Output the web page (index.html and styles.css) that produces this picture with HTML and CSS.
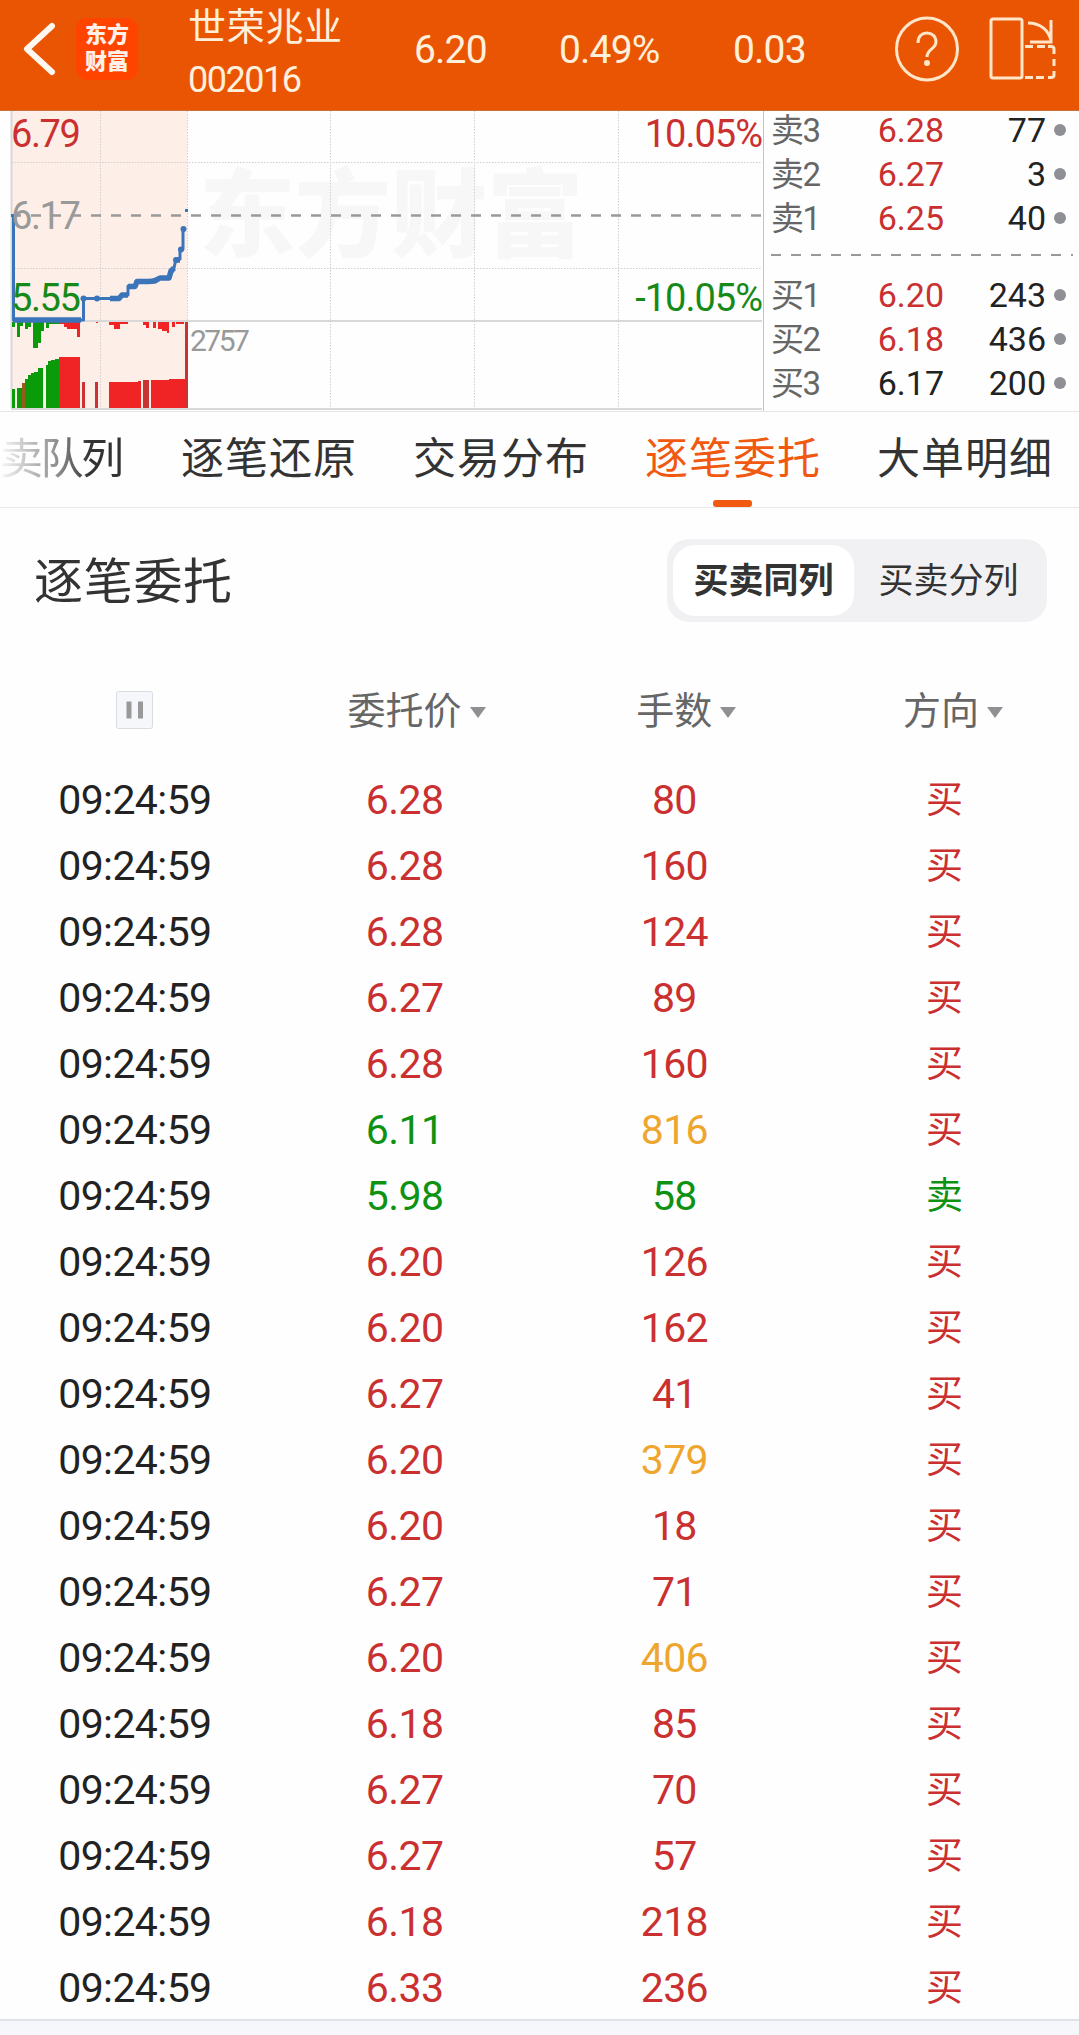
FILE: index.html
```html
<!DOCTYPE html>
<html lang="zh-CN">
<head>
    <meta charset="UTF-8">
    <meta name="viewport" content="width=device-width, initial-scale=1.0">
    <title>世荣兆业 002016</title>
    <link rel="stylesheet" href="styles.css">
</head>
<body>
    <header class="topbar">
        <svg class="back" viewBox="0 0 34 54"><path d="M30 4 L5 27 L30 50"/></svg>
        <div class="logo">东方<br>财富</div>
        <div class="stock">
            <div class="stock-name">世荣兆业</div>
            <div class="stock-code">002016</div>
        </div>
        <div class="quote">6.20</div>
        <div class="quote">0.49%</div>
        <div class="quote">0.03</div>
        <svg class="help" viewBox="0 0 64 66">
            <ellipse cx="32" cy="33" rx="30.5" ry="31"/>
            <path d="M23 27 C23 20 27 17 32 17 C37 17 41 20.500 41 26 C41 33 32 33 32 41"/>
            <circle class="fill" cx="32" cy="47" r="3"/>
        </svg>
        <svg class="rotate" viewBox="0 0 68 64">
            <rect x="2" y="2" width="31" height="59" rx="2"/>
            <path d="M39 6 C51 6 60 13 62 24 M62 3 V25 H41"/>
            <path d="M36 29.500 H44 M48 29.500 H56 M59 29.500 H62 Q65 29.500 65 32 V37 M65 42 V49 M65 54 V58 Q65 60.500 62 60.500 H59 M55 60.500 H47 M44 60.500 H36"/>
        </svg>
    </header>

    <section class="market">
        <svg class="chart" viewBox="0 0 764 300">
            <rect class="auction" x="12" y="0" width="175" height="297"/>
            <text class="watermark" x="199" y="138">东方财富</text>
            <path class="grid" d="M12 51.500 H762 M12 157.500 H762 M100.500 0 V297 M187.500 0 V297 M330.500 0 V297 M474.500 0 V297 M618.500 0 V297"/>
            <path class="axis" d="M11.500 0 V297 M11 210 H762 M11 298 H762"/>
            <path class="edge" d="M763.500 0 V300"/>
            <path class="close-line" d="M11 104.500 H762"/>
            <g id="bars"></g>
            <path class="price" d="M11 104.500 H13.500 V209 H83.500 V187.500 H119 L122 184 H128 V175 H136 V170 H151 L158 167 H169 L174 157 L176 148 H180 V138 H183 V118"/>
            <path class="price-thick" d="M13 209 H81 M110 187.500 H119 L122 184 H128 M128 175.500 H135 L137 170.500 H148 L155 170 L160 167 H169 L171 160 L174 157 M175 149 H180"/>
            <g class="dots">
                <circle cx="83.500" cy="187.500" r="3"/>
                <circle cx="97" cy="187.500" r="3"/>
                <circle cx="176" cy="149" r="3"/>
                <circle cx="181" cy="138.500" r="3"/>
                <circle cx="183.500" cy="118" r="3"/>
                <rect x="185" y="98" width="3" height="3"/>
            </g>
            <text class="label up" x="11" y="36">6.79</text>
            <text class="label mid" x="11" y="118">6.17</text>
            <text class="label down" x="11" y="200">5.55</text>
            <text class="label up end" x="762" y="36">10.05%</text>
            <text class="label down end" x="762" y="200">-10.05%</text>
            <text class="volume" x="190" y="240">2757</text>
        </svg>
        <div class="book">
            <div class="level"><span>卖3</span><b class="up">6.28</b><i>77</i></div>
            <div class="level"><span>卖2</span><b class="up">6.27</b><i>3</i></div>
            <div class="level"><span>卖1</span><b class="up">6.25</b><i>40</i></div>
            <svg class="split" viewBox="0 0 302 2"><path d="M0 1 H302"/></svg>
            <div class="level"><span>买1</span><b class="up">6.20</b><i>243</i></div>
            <div class="level"><span>买2</span><b class="up">6.18</b><i>436</i></div>
            <div class="level"><span>买3</span><b>6.17</b><i>200</i></div>
        </div>
    </section>

    <nav class="tabs">
        <a class="faded">卖队列</a>
        <a>逐笔还原</a>
        <a>交易分布</a>
        <a class="active">逐笔委托</a>
        <a>大单明细</a>
    </nav>

    <div class="title-row">
        <h1>逐笔委托</h1>
        <div class="switch">
            <button class="on">买卖同列</button>
            <button>买卖分列</button>
        </div>
    </div>

    <div class="row head">
        <div><svg class="pause" viewBox="0 0 37 38"><rect x=".5" y=".5" width="36" height="37" rx="2"/><path d="M13 10.500 V27.500 M24.500 10.500 V27.500"/></svg></div>
        <div><span class="sort">委托价</span></div>
        <div><span class="sort">手数</span></div>
        <div><span class="sort">方向</span></div>
    </div>
    <div id="orders" class="orders"></div>
    <footer class="bottom"></footer>

    <script src="script.js"></script>
</body>
</html>
```
FILE: styles.css
```css
* {
    box-sizing: border-box;
}
body {
    margin: 0;
    background: #fefefe;
    color: #222;
    font-family: Roboto, "Noto Sans CJK SC", sans-serif;
    height: 2035px;
    overflow: hidden;
}
svg {
    display: block;
    flex: none;
}
.topbar {
    display: flex;
    align-items: center;
    height: 111px;
    padding-bottom: 13px;
    background: #ea5504;
    border-bottom: 1px solid #c8703c;
    color: #fff0dc;
}
.topbar svg {
    fill: none;
    stroke: #ffe6c8;
    stroke-width: 3;
}
.topbar .back {
    width: 34px;
    height: 54px;
    margin-left: 22px;
    stroke: #fff8f0;
    stroke-width: 6;
    stroke-linecap: round;
    stroke-linejoin: round;
}
.logo {
    width: 62px;
    height: 62px;
    margin-left: 20px;
    padding-top: 3px;
    border-radius: 11px;
    background: #ff4400;
    color: #fff0e8;
    font-size: 22px;
    font-weight: 900;
    line-height: 27px;
    text-align: center;
}
.stock {
    width: 226px;
    margin-left: 50px;
    padding-top: 10px;
}
.stock-name {
    font-size: 38px;
    line-height: 52px;
    letter-spacing: 0.7px;
}
.stock-code {
    font-size: 36px;
    line-height: 54px;
    letter-spacing: -1.5px;
}
.quote {
    width: 145px;
    font-size: 39px;
    letter-spacing: -0.8px;
    padding-top: 2px;
}
.quote + .quote {
    width: 174px;
}
.quote + .quote + .quote {
    width: 162px;
}
.help {
    width: 64px;
    height: 66px;
}
.topbar .help .fill {
    fill: #ffe6c8;
    stroke: none;
}
.rotate {
    width: 68px;
    height: 64px;
    margin-left: 30px;
}

.market {
    display: flex;
    height: 301px;
    border-bottom: 1px solid #e6e6e6;
}
.chart {
    width: 764px;
    height: 300px;
}
.auction {
    fill: #fdeee7;
}
.watermark {
    font-size: 96px;
    font-weight: 900;
    fill: #f7f7f7;
}
.grid {
    fill: none;
    stroke: #cfcfcf;
    stroke-dasharray: 1.5 1.5;
}
.axis {
    fill: none;
    stroke: #d8d8d8;
    stroke-width: 2;
}
.edge {
    stroke: #c4c4c4;
}
.close-line {
    stroke: #999;
    stroke-width: 2.5;
    stroke-dasharray: 10 10;
}
.price, .price-thick {
    fill: none;
    stroke: #3b74b9;
    stroke-width: 3;
    stroke-linejoin: round;
}
.price-thick {
    stroke-width: 5.5;
}
.dots {
    fill: #3b74b9;
}
.label {
    font-size: 38px;
    letter-spacing: -1.4px;
}
.end {
    text-anchor: end;
    letter-spacing: -1px;
}
.up {
    color: #cb3030;
    fill: #cb3030;
}
.down {
    color: #0f9212;
    fill: #158a18;
}
.mid {
    fill: #999;
}
.volume {
    font-size: 30px;
    letter-spacing: -2.5px;
    fill: #999;
}

.book {
    flex: 1;
    padding: 0 12px 0 7px;
}
.level {
    display: flex;
    align-items: center;
    height: 44px;
    position: relative;
    top: -3px;
    padding-right: 7px;
    font-size: 34px;
}
.level span {
    width: 73px;
    margin-top: -5px;
    color: #666;
    font-size: 33px;
    letter-spacing: -1.5px;
}
.level b {
    width: 100px;
    font-weight: 400;
    text-align: right;
}
.level i {
    flex: 1;
    font-style: normal;
    text-align: right;
}
.level::after {
    content: "";
    width: 12px;
    height: 12px;
    margin-left: 8px;
    border-radius: 50%;
    background: #8f8f96;
}
.split {
    width: 302px;
    height: 2px;
    margin: 11px 0 20px;
}
.split path {
    stroke: #999;
    stroke-width: 2;
    stroke-dasharray: 10 10;
}

.tabs {
    display: flex;
    gap: 56px;
    height: 96px;
    overflow: hidden;
    border-bottom: 1px solid #e8e8e8;
    color: #333;
    font-size: 43px;
    line-height: 94px;
    letter-spacing: 1px;
    white-space: nowrap;
}
.tabs a {
    flex: none;
    position: relative;
}
.tabs .faded {
    width: 125px;
    letter-spacing: -2.5px;
    color: transparent;
    background: linear-gradient(90deg, #eee 5px, #888 60px, #333 90px);
    -webkit-background-clip: text;
    background-clip: text;
}
.tabs .active {
    color: #f0590f;
}
.tabs .active::after {
    content: "";
    position: absolute;
    left: 68px;
    bottom: 0;
    width: 39px;
    height: 7px;
    border-radius: 3px;
    background: #f0590f;
}

.title-row {
    display: flex;
    justify-content: space-between;
    align-items: center;
    height: 145px;
    padding: 0 32px 0 34px;
}
h1 {
    margin: -6px 0 0;
    color: #333;
    font-size: 49px;
    font-weight: 400;
    letter-spacing: 0.7px;
}
.switch {
    display: flex;
    width: 380px;
    height: 83px;
    padding: 6px;
    border-radius: 22px;
    background: #f1f1f4;
}
.switch button {
    width: 187px;
    padding: 0 0 7px 2px;
    border: none;
    border-radius: 22px;
    background: none;
    color: #333;
    font: 35px "Noto Sans CJK SC", sans-serif;
}
.switch .on {
    width: 181px;
    padding-left: 0;
    background: #fff;
    font-weight: 700;
}

.row {
    display: grid;
    grid-template-columns: repeat(4, 1fr);
    align-items: center;
    height: 66px;
    text-align: center;
    font-size: 41px;
    letter-spacing: -0.6px;
}
.row.head {
    height: 114px;
    color: #666;
    font-size: 38px;
    letter-spacing: 0;
}
.pause {
    width: 37px;
    height: 38px;
    margin: 0 auto;
}
.pause rect {
    fill: #f5f7fa;
    stroke: #d9dde2;
}
.pause path {
    stroke: #999;
    stroke-width: 5;
}
.sort {
    position: relative;
    top: -3px;
}
.row > div:last-child .sort {
    left: -3px;
}
.sort::after {
    content: "";
    position: absolute;
    left: calc(100% + 8px);
    top: 50%;
    margin-top: -4px;
    border: 8.5px solid transparent;
    border-top: 11px solid #8f8f94;
    border-bottom: 0;
}
.side {
    padding-bottom: 6px;
    font-size: 37px;
}
.big {
    color: #efa62f;
}
.orders {
    height: 1252px;
}
.bottom {
    position: relative;
    height: 17px;
    border-top: 2px solid #dfe2e6;
    background: #f5f7fa;
}
```
FILE: script.js
```js
// price, lots, side
const orders = [
    ['6.28', 80, '买'],
    ['6.28', 160, '买'],
    ['6.28', 124, '买'],
    ['6.27', 89, '买'],
    ['6.28', 160, '买'],
    ['6.11', 816, '买'],
    ['5.98', 58, '卖'],
    ['6.20', 126, '买'],
    ['6.20', 162, '买'],
    ['6.27', 41, '买'],
    ['6.20', 379, '买'],
    ['6.20', 18, '买'],
    ['6.27', 71, '买'],
    ['6.20', 406, '买'],
    ['6.18', 85, '买'],
    ['6.27', 70, '买'],
    ['6.27', 57, '买'],
    ['6.18', 218, '买'],
    ['6.33', 236, '买']
];

document.getElementById('orders').innerHTML = orders.map(([price, lots, side]) => {
    const dir = side === '买' ? 'up' : 'down';
    const priceClass = price < 6.17 ? 'down' : 'up';
    const lotsClass = lots > 300 ? 'big' : dir;
    return `<div class="row">
        <div>09:24:59</div>
        <div class="${priceClass}">${price}</div>
        <div class="${lotsClass}">${lots}</div>
        <div class="side ${dir}">${side}</div>
    </div>`;
}).join('');

// volume bars: x, width, top, bottom, color
const green = '#0a9a0a', red = '#f02424', dark = '#c93333';
const bars = [
    [12, 3, 278, 297, green], [17, 5, 277, 297, green], [22, 3, 272, 297, '#9a5a1a'],
    [25, 3, 268, 297, green], [28, 3, 264, 297, green], [31, 3, 262, 297, green],
    [34, 4, 261, 297, green], [38, 5, 257, 297, green], [46, 2, 254, 297, green],
    [48, 3, 250, 297, green], [51, 4, 249, 297, green], [55, 4, 248, 297, green],
    [59, 21, 246, 297, red], [82, 3, 271, 297, dark], [95, 3, 271, 297, dark],
    [109, 29, 271, 297, red], [138, 3, 270, 297, red], [143, 6, 269, 297, dark],
    [151, 18, 269, 297, red], [169, 16, 268, 297, red], [185, 3, 211, 297, dark],
    [12, 3, 211, 216, green], [17, 3, 211, 226, green], [20, 3, 211, 215, green],
    [25, 3, 211, 218, green], [28, 3, 211, 216, green], [33, 5, 211, 237, green],
    [38, 3, 211, 232, green], [41, 3, 211, 220, green], [46, 3, 211, 217, green],
    [49, 10, 211, 213, green], [59, 5, 211, 213, red], [64, 3, 211, 216, red],
    [67, 10, 211, 218, red], [77, 3, 211, 226, red], [96, 2, 211, 212, dark],
    [109, 5, 211, 214, red], [114, 6, 211, 218, red], [120, 8, 211, 213, red],
    [143, 3, 211, 214, red], [146, 3, 211, 217, red], [153, 3, 211, 217, red],
    [158, 4, 211, 218, red], [162, 5, 211, 220, red], [167, 2, 211, 222, red],
    [172, 3, 211, 216, red], [176, 8, 211, 213, red]
];

document.getElementById('bars').innerHTML = bars.map(([x, w, top, bottom, color]) =>
    `<rect x="${x}" y="${top}" width="${w}" height="${bottom - top}" fill="${color}"/>`
).join('');
```
